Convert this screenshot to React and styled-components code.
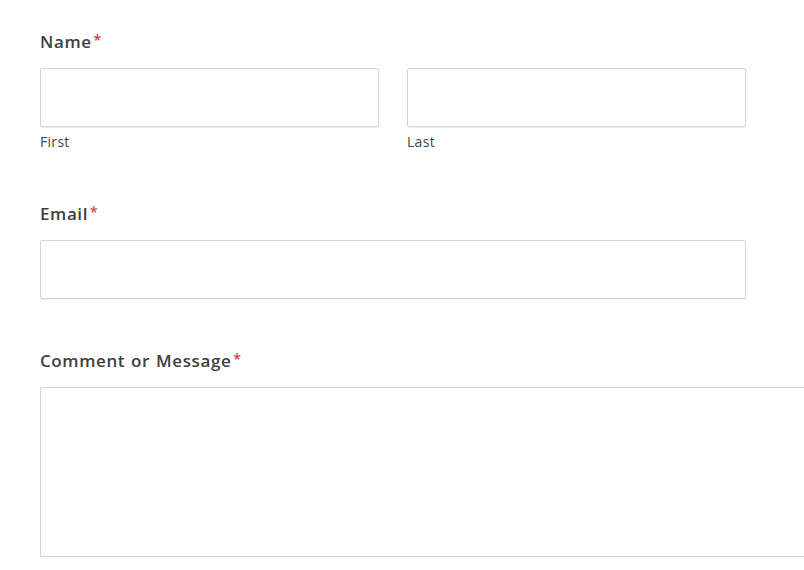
import styled, { createGlobalStyle } from 'styled-components';

const Global = createGlobalStyle`
  html, body {
    margin: 0;
    padding: 0;
    background: #fff;
    overflow: hidden;
  }
  body {
    font-family: "Open Sans", "Liberation Sans", sans-serif;
    color: #3c3c3c;
  }
`;

const Form = styled.form`
  padding: 30px 0 0 40px;
  width: 800px;
`;

const Field = styled.div`
  margin-bottom: ${p => p.gap || 0}px;
`;

const Label = styled.label`
  display: block;
  font-size: 17px;
  line-height: 24px;
  font-weight: 600;
  letter-spacing: 0.6px;
  word-spacing: 1px;
  color: #404040;
  margin-bottom: 13px;
`;

const Req = styled.span`
  position: relative;
  top: -3px;
  color: #c9474b;
  font-size: 14px;
  margin-left: 2px;
`;

const Row = styled.div`
  display: flex;
  gap: 28px;
`;

const Col = styled.div`
  display: flex;
  flex-direction: column;
`;

const Input = styled.input`
  box-sizing: border-box;
  width: ${p => p.w}px;
  height: 59px;
  border: 1px solid #d4d4d4;
  border-radius: 2px;
  box-shadow: 0 1px 1px rgba(0, 0, 0, 0.07);
  background: #fff;
  margin: 0;
  outline: none;
`;

const Area = styled.textarea`
  box-sizing: border-box;
  width: 780px;
  height: 170px;
  border: 1px solid #d4d4d4;
  border-radius: 2px;
  box-shadow: 0 1px 1px rgba(0, 0, 0, 0.07);
  resize: none;
  margin: 0;
  display: block;
  outline: none;
`;

const Sub = styled.span`
  font-size: 14px;
  line-height: 18px;
  letter-spacing: 0.3px;
  color: #444;
  margin-top: 6px;
`;

export default function App() {
  return (
    <>
      <Global />
      <Form onSubmit={e => e.preventDefault()}>
        <Field gap={51}>
          <Label>Name<Req>*</Req></Label>
          <Row>
            <Col>
              <Input type="text" w={339} />
              <Sub>First</Sub>
            </Col>
            <Col>
              <Input type="text" w={339} />
              <Sub>Last</Sub>
            </Col>
          </Row>
        </Field>
        <Field gap={50}>
          <Label>Email<Req>*</Req></Label>
          <Input type="email" w={706} />
        </Field>
        <Field>
          <Label>Comment or Message<Req>*</Req></Label>
          <Area />
        </Field>
      </Form>
    </>
  );
}
